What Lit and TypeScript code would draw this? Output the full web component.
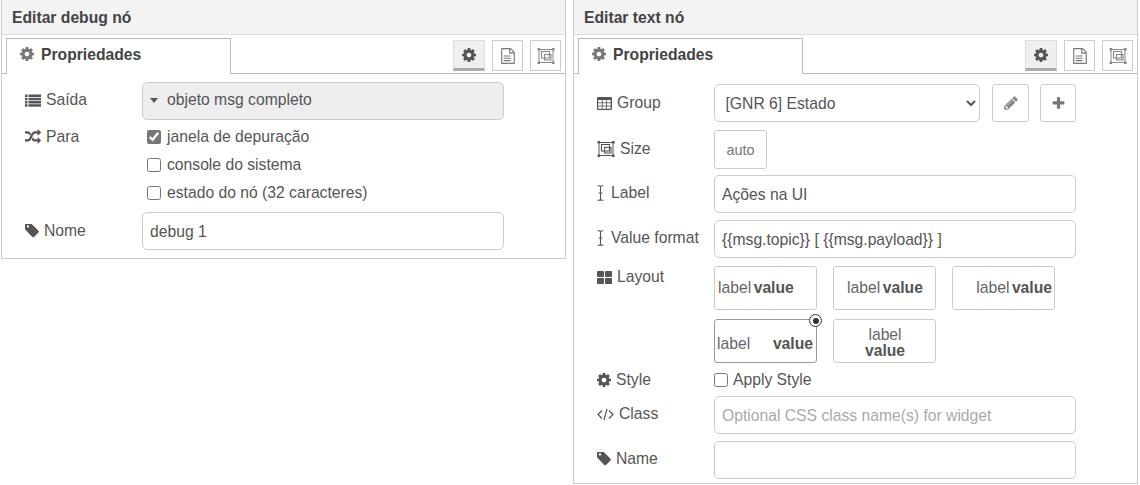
import { LitElement, html, css, svg } from "lit";
import { customElement } from "lit/decorators.js";

const FA: Record<string, string> = {
  cog: "M1152 896q0-106-75-181t-181-75-181 75-75 181 75 181 181 75 181-75 75-181zm512-109v222q0 12-8 23t-20 13l-185 28q-19 54-39 91 35 50 107 138 10 12 10 25t-9 23q-27 37-99 108t-94 71q-12 0-26-9l-138-108q-44 23-91 38-16 136-29 186-7 28-36 28h-222q-14 0-24.5-8.5t-11.5-21.5l-28-184q-49-16-90-37l-141 107q-10 9-25 9-14 0-25-11-126-114-165-168-7-10-7-23 0-12 8-23 15-21 51-66.5t54-70.5q-27-50-41-99l-183-27q-13-2-21-12.5t-8-23.5v-222q0-12 8-23t19-13l186-28q14-46 39-92-40-57-107-138-10-12-10-24 0-10 9-23 26-36 98.5-107.5t94.5-71.5q13 0 26 10l138 107q44-23 91-38 16-136 29-186 7-28 36-28h222q14 0 24.5 8.5t11.5 21.5l28 184q49 16 90 37l142-107q9-9 24-9 13 0 25 10 129 119 165 170 7 8 7 22 0 12-8 23-15 21-51 66.5t-54 70.5q26 50 41 98l183 28q13 2 21 12.5t8 23.5z",
  random: "M666 481q-60 92-137 273-22-45-37-72.5t-40.5-63.5-51-56.5-63-35-81.5-14.5h-224q-14 0-23-9t-9-23v-192q0-14 9-23t23-9h224q250 0 410 225zm1126 799q0 14-9 23l-320 320q-9 9-23 9-13 0-22.5-9.5t-9.5-22.5v-192q-32 0-85 .5t-81 1-73-1-71-5-64-10.5-63-18.5-58-28.5-59-40-55-53.5-56-69.5q59-93 136-273 22 45 37 72.5t40.5 63.5 51 56.5 63 35 81.5 14.5h256v-192q0-14 9-23t23-9q12 0 24 10l319 319q9 9 9 23zm0-896q0 14-9 23l-320 320q-9 9-23 9-13 0-22.5-9.5t-9.5-22.5v-192h-256q-48 0-87 15t-69 45-51 61.5-45 77.5q-32 62-78 171-29 66-49.5 111t-54 105-64 100-74 83-90 68.5-106.5 42-128 16.5h-224q-14 0-23-9t-9-23v-192q0-14 9-23t23-9h224q48 0 87-15t69-45 51-61.5 45-77.5q32-62 78-171 29-66 49.5-111t54-105 64-100 74-83 90-68.5 106.5-42 128-16.5h256v-192q0-14 9-23t23-9q12 0 24 10l319 319q9 9 9 23z",
  tag: "M576 448q0-53-37.5-90.5t-90.5-37.5-90.5 37.5-37.5 90.5 37.5 90.5 90.5 37.5 90.5-37.5 37.5-90.5zm1067 576q0 53-37 90l-491 492q-39 37-91 37-53 0-90-37l-715-716q-38-37-64.5-101t-26.5-117v-416q0-52 38-90t90-38h416q53 0 117 26.5t102 64.5l715 714q37 39 37 91z",
  pencil: "M491 1536l91-91-235-235-91 91v107h128v128h107zm523-928q0-22-22-22-10 0-17 7l-542 542q-7 7-7 17 0 22 22 22 10 0 17-7l542-542q7-7 7-17zm-54-192l416 416-832 832h-416v-416zm683 96q0 53-37 90l-166 166-416-416 166-165q36-38 90-38 53 0 91 38l235 234q37 39 37 91z",
  plus: "M1600 736v192q0 40-28 68t-68 28h-416v416q0 40-28 68t-68 28h-192q-40 0-68-28t-28-68v-416h-416q-40 0-68-28t-28-68v-192q0-40 28-68t68-28h416v-416q0-40 28-68t68-28h192q40 0 68 28t28 68v416h416q40 0 68 28t28 68z",
  file: "M1596 380q28 28 48 76t20 88v1152q0 40-28 68t-68 28h-1344q-40 0-68-28t-28-68v-1600q0-40 28-68t68-28h896q40 0 88 20t76 48zm-444-244v376h376q-10-29-22-41l-313-313q-12-12-41-22zm384 1528v-1024h-416q-40 0-68-28t-28-68v-416h-768v1536h1280zm-1128-800q0-14 9-23t23-9h704q14 0 23 9t9 23v64q0 14-9 23t-23 9h-704q-14 0-23-9t-9-23v-64zm736 224q14 0 23 9t9 23v64q0 14-9 23t-23 9h-704q-14 0-23-9t-9-23v-64q0-14 9-23t23-9h704zm0 256q14 0 23 9t9 23v64q0 14-9 23t-23 9h-704q-14 0-23-9t-9-23v-64q0-14 9-23t23-9h704z",
};

const fa = (n: string, size: number, color = "#555", vb = "0 0 1792 1792") =>
  html`<svg class="ic" width=${size} height=${size} viewBox=${vb}><path d=${FA[n]} fill=${color} fill-rule="evenodd"></path></svg>`;
const cog = (size: number, color = "#555") => fa("cog", size, color, "128 128 1536 1536");
const tag = fa("tag", 14, "#555", "128 192 1536 1536");

const list = html`<svg class="ic" width="16" height="13" viewBox="0 0 16 13" fill="#555">
  <rect x="0" y="0.5" width="2.5" height="2.5"></rect><rect x="0" y="3.8" width="2.5" height="2.5"></rect>
  <rect x="0" y="7" width="2.5" height="2.5"></rect><rect x="0" y="10.2" width="2.5" height="2.5"></rect>
  <rect x="3.5" y="0.5" width="12.5" height="2.5"></rect><rect x="3.5" y="3.8" width="12.5" height="2.5"></rect>
  <rect x="3.5" y="7" width="12.5" height="2.5"></rect><rect x="3.5" y="10.2" width="12.5" height="2.5"></rect></svg>`;

const table = html`<svg class="ic" width="15" height="13" viewBox="0 0 15 13">
  <rect x="0" y="0" width="15" height="13" rx="1.2" fill="#555"></rect>
  ${[0, 1, 2].map((c) => [0, 1, 2].map((r) => svg`<rect x=${1.2 + c * 4.4} y=${3 + r * 3.2} width="3.6" height="2.4" fill="#fff"></rect>`))}
</svg>`;

const ungroup = (w: number, color = "#666") => html`<svg class="ic" width=${w} height=${w} viewBox="0 0 18 18" fill="none">
  <rect x="2" y="2.5" width="14" height="13" stroke=${color} stroke-width="1"></rect>
  <rect x="4.5" y="4.5" width="8" height="6.5" stroke=${color} stroke-width="1.1"></rect>
  <rect x="7.5" y="7.5" width="6.5" height="5.5" stroke=${color} stroke-width="1.1"></rect>
  ${[[0.5, 1], [15, 1], [0.5, 14.5], [15, 14.5]].map(([x, y]) => svg`<rect x=${x} y=${y} width="2.6" height="2.6" rx=".5" fill=${color}></rect>`)}
</svg>`;

const cursor = html`<svg class="ic" width="9" height="16" viewBox="0 0 9 16" fill="none" stroke="#555" stroke-width="1.1">
  <path d="M.6 .8h1.4Q3.5 .8 3.5 2.2v11.6Q3.5 15.2 2 15.2H.6M6.4 .8H5Q3.5 .8 3.5 2.2M6.4 15.2H5Q3.5 15.2 3.5 13.8M1.6 8h3.8"></path></svg>`;

const grid = html`<svg class="ic" width="15" height="13" viewBox="0 0 15 13" fill="#555">
  <rect x="0" y="0" width="7" height="6" rx="1"></rect><rect x="8" y="0" width="7" height="6" rx="1"></rect>
  <rect x="0" y="7" width="7" height="6" rx="1"></rect><rect x="8" y="7" width="7" height="6" rx="1"></rect></svg>`;

const code = html`<svg class="ic" width="17" height="13" viewBox="0 0 17 13" fill="none" stroke="#555" stroke-width="1.2">
  <path d="M5 2.5 1 6.5l4 4M12 2.5l4 4-4 4M10 .8 7 12.2"></path></svg>`;

@customElement("app-root")
export class AppRoot extends LitElement {
  static styles = css`
    :host {
      display: block;
      width: 1140px;
      height: 485px;
      background: #fff;
      font-family: "Liberation Sans", Arial, sans-serif;
      font-size: 15.7px;
      color: #555;
      overflow: hidden;
    }
    * { box-sizing: border-box; }
    .page { display: flex; align-items: flex-start; padding-left: 1px; }
    .panel { border: 1px solid #ccc; border-top: 0; }
    .left { width: 565px; height: 259px; margin-right: 7px; }
    .right { width: 565px; height: 484px; }
    .head {
      height: 35px;
      background: #f3f3f3;
      border-bottom: 1px solid #ddd;
      padding: 9px 0 0 10px;
      font-weight: bold;
      font-size: 15.7px;
      line-height: 18px;
      color: #444;
    }
    .tabs {
      height: 39px;
      border-bottom: 1px solid #bbb;
      display: flex;
      justify-content: space-between;
      padding: 3px 4px 0 4px;
    }
    .tab {
      width: 225px;
      height: 36px;
      border: 1px solid #bbb;
      border-bottom: 0;
      background: #fff;
      padding: 7px 0 0 13px;
      display: flex;
      align-items: flex-start;
      gap: 7px;
      font-weight: bold;
      font-size: 15.7px;
      line-height: 18px;
      color: #444;
    }
    .tab .ic { margin-top: 1px; }
    .tools { display: flex; gap: 7px; padding-top: 2px; }
    .tool {
      width: 31px;
      height: 31px;
      border: 1px solid #ccc;
      background: #fff;
      display: flex;
      align-items: center;
      justify-content: center;
    }
    .tool.on { width: 32px; background: #efefef; border-bottom: 3px solid #aaa; border-color: #ddd #ddd #aaa #ddd; }
    .form { padding: 0 0 0 23px; }
    .row { display: flex; align-items: flex-start; }
    .lab {
      width: 117px;
      flex: none;
      line-height: 20px;
      padding-top: 9px;
      display: flex;
      align-items: center;
      gap: 5px;
      white-space: nowrap;
    }
    .lab.t8 { padding-top: 8px; }
    .lab.t1 { padding-top: 1px; }
    .lab.t0 { padding-top: 0; }
    .lab.t4 { padding-top: 4px; }
    .ic { display: block; flex: none; }
    .box {
      height: 38px;
      width: 362px;
      border: 1px solid #ccc;
      border-radius: 5px;
      background: #fff;
      font: 15.7px "Liberation Sans", Arial, sans-serif;
      color: #555;
      padding: 2px 7px 0;
      outline: none;
    }
    .box::placeholder { color: #aaa; opacity: 1; }
    .fake {
      background: #eee;
      display: flex;
      align-items: center;
      gap: 9px;
      padding: 0 0 2px 7px;
    }
    .caret { width: 0; height: 0; border: 4px solid transparent; border-top: 5px solid #555; border-bottom: 0; }
    .checks { display: flex; flex-direction: column; padding-left: 5px; }
    .chk {
      height: 28px;
      display: flex;
      align-items: center;
      gap: 6px;
      white-space: nowrap;
    }
    input[type="checkbox"] {
      width: 14px;
      height: 14px;
      margin: 0;
      accent-color: #777;
      flex: none;
    }
    .sel { width: 266px; padding: 0 0 0 6.5px; }
    .iconbtn {
      height: 38px;
      width: 37px;
      border: 1px solid #ccc;
      border-radius: 3px;
      background: #fff;
      display: flex;
      align-items: center;
      justify-content: center;
    }
    .auto {
      width: 53px;
      height: 39px;
      border: 1px solid #ccc;
      border-radius: 3px;
      display: flex;
      align-items: center;
      justify-content: center;
      font-size: 14.5px;
      color: #777;
    }
    .layouts { display: grid; grid-template-columns: repeat(3, 103px); gap: 9px 16px; }
    .lay {
      position: relative;
      height: 44px;
      border: 1px solid #ccc;
      border-radius: 3px;
      padding: 0 2px 0 3px;
      display: flex;
      align-items: center;
      line-height: 16px;
    }
    .lay span { color: #666; }
    .lay.c { justify-content: center; gap: 2.5px; }
    .lay.r { justify-content: flex-end; gap: 2.5px; }
    .lay.l { gap: 2.5px; }
    .lay.sb { justify-content: space-between; border-color: #999; padding: 5px 3px 0 2px; }
    .lay.st { flex-direction: column; justify-content: center; align-items: center; padding-top: 4px; }
    .radio {
      position: absolute;
      top: -6px;
      right: -6px;
      width: 13px;
      height: 13px;
      border-radius: 50%;
      background: #fff;
      border: 1.5px solid #333;
      display: flex;
      align-items: center;
      justify-content: center;
    }
    .radio::after { content: ""; width: 6px; height: 6px; border-radius: 50%; background: #333; }
    .apply { display: flex; align-items: center; gap: 5px; height: 20px; }
    .m8 { margin-top: 8px; }
    .m7 { margin-top: 7px; }
    .m6 { margin-top: 6px; }
    .m5 { margin-top: 5px; }
    .m3 { margin-top: 3px; }
    .pt8 { padding-top: 8px; }
    .pt10 { padding-top: 10px; }
    .ml12 { margin-left: 12px; }
    .ml11 { margin-left: 11px; width: 36px; }
  `;

  private tabs() {
    return html`<div class="tabs">
      <div class="tab">${cog(14, "#777")}<span>Propriedades</span></div>
      <div class="tools">
        <div class="tool on">${cog(14, "#555")}</div>
        <div class="tool">${fa("file", 16, "#777")}</div>
        <div class="tool">${ungroup(18, "#888")}</div>
      </div>
    </div>`;
  }

  render() {
    return html`<div class="page">
      <section class="panel left">
        <div class="head">Editar debug nó</div>
        ${this.tabs()}
        <div class="form pt8">
          <div class="row">
            <div class="lab t8">${list}<span>Saída</span></div>
            <div class="box fake"><i class="caret"></i><span>objeto msg completo</span></div>
          </div>
          <div class="row m3">
            <div class="lab t4">${fa("random", 16)}<span>Para</span></div>
            <div class="checks">
              <label class="chk"><input type="checkbox" checked /><span>janela de depuração</span></label>
              <label class="chk"><input type="checkbox" /><span>console do sistema</span></label>
              <label class="chk"><input type="checkbox" /><span>estado do nó (32 caracteres)</span></label>
            </div>
          </div>
          <div class="row m5">
            <div class="lab">${tag}<span>Nome</span></div>
            <input class="box" .value=${"debug 1"} />
          </div>
        </div>
      </section>

      <section class="panel right">
        <div class="head">Editar text nó</div>
        ${this.tabs()}
        <div class="form pt10">
          <div class="row">
            <div class="lab">${table}<span>Group</span></div>
            <select class="box sel"><option>[GNR 6] Estado</option></select>
            <div class="iconbtn ml12">${fa("pencil", 16, "#888")}</div>
            <div class="iconbtn ml11">${fa("plus", 15, "#777")}</div>
          </div>
          <div class="row m8">
            <div class="lab">${ungroup(18, "#555")}<span>Size</span></div>
            <div class="auto">auto</div>
          </div>
          <div class="row m6">
            <div class="lab t8">${cursor}<span>Label</span></div>
            <input class="box" .value=${"Ações na UI"} />
          </div>
          <div class="row m7">
            <div class="lab t8">${cursor}<span>Value format</span></div>
            <input class="box" .value=${"{{msg.topic}} [ {{msg.payload}} ]"} />
          </div>
          <div class="row m8">
            <div class="lab t1">${grid}<span>Layout</span></div>
            <div class="layouts">
              <div class="lay l"><span>label</span><b>value</b></div>
              <div class="lay c"><span>label</span><b>value</b></div>
              <div class="lay r"><span>label</span><b>value</b></div>
              <div class="lay sb"><span>label</span><b>value</b><i class="radio"></i></div>
              <div class="lay st"><span>label</span><b>value</b></div>
            </div>
          </div>
          <div class="row m7">
            <div class="lab t0">${cog(14)}<span>Style</span></div>
            <label class="apply"><input type="checkbox" /><span>Apply Style</span></label>
          </div>
          <div class="row m6">
            <div class="lab t8">${code}<span>Class</span></div>
            <input class="box" placeholder="Optional CSS class name(s) for widget" />
          </div>
          <div class="row m7">
            <div class="lab t8">${tag}<span>Name</span></div>
            <input class="box" />
          </div>
        </div>
      </section>
    </div>`;
  }
}
